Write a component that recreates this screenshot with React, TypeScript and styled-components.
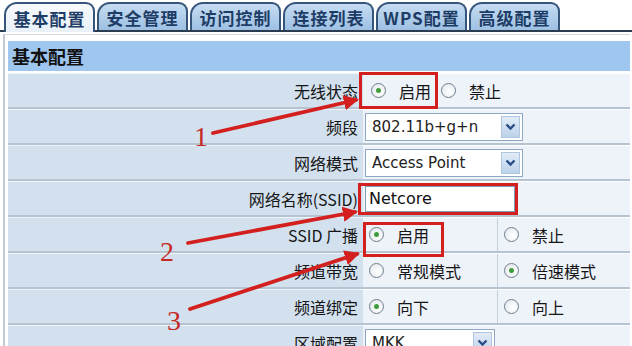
import React from "react";
import styled, { createGlobalStyle } from "styled-components";

const Global = createGlobalStyle`
  html, body { margin: 0; padding: 0; background: #fff; }
  body { font-family: "Noto Sans CJK SC", "Noto Sans", sans-serif; }
`;

const Page = styled.div`
  position: relative;
  width: 632px;
  height: 346px;
  overflow: hidden;
  background: #fff;
`;

const TabBar = styled.div`
  display: flex;
  align-items: flex-end;
  gap: 2px;
  height: 30px;
  padding: 0 0 0 4px;
  border-bottom: 2px solid #2c3c50;
`;

const Tab = styled.div<{ $active?: boolean }>`
  width: 91px;
  height: ${(p) => (p.$active ? "30px" : "28px")};
  margin-bottom: ${(p) => (p.$active ? "-2px" : "0")};
  box-sizing: border-box;
  border: 2px solid #36557a;
  border-bottom: none;
  border-radius: 13px 9px 0 0;
  background: ${(p) =>
    p.$active
      ? "linear-gradient(#f7fafd, #e9f0f7)"
      : "linear-gradient(#c6dcf2, #9dc0e3)"};
  display: flex;
  align-items: center;
  justify-content: center;
  font-weight: 700;
  font-size: 17px;
  letter-spacing: 1px;
  color: #1d3d66;
`;

const Panel = styled.div`
  margin: 2px 2px 0 3px;
  border-left: 2px solid #c3cad3;
  border-top: 1px solid #d3d9df;
  padding: 6px 0 0 3px;
`;

const Header = styled.div`
  height: 30px;
  margin-bottom: 2px;
  background: #9ec6ee;
  display: flex;
  align-items: center;
  padding-left: 4px;
  font-weight: 700;
  font-size: 18px;
  color: #111;
`;

const Row = styled.div`
  display: grid;
  grid-template-columns: 355px 1fr;
  height: 36px;
  box-sizing: border-box;
  border-bottom: 2px solid #b6c4d2;
`;

const Label = styled.div`
  background: #d3e1ef;
  border-top: 1px solid #eef4fa;
  display: flex;
  align-items: center;
  justify-content: flex-end;
  padding-right: 5px;
  font-size: 16px;
  color: #151515;
  white-space: nowrap;
`;

const Value = styled.div<{ $split?: boolean }>`
  background: #eef3f9;
  border-top: 1px solid #fbfdff;
  display: ${(p) => (p.$split ? "grid" : "flex")};
  grid-template-columns: 134px 1fr;
  align-items: center;
  padding-left: ${(p) => (p.$split ? "0" : "2px")};
`;

const Cell = styled.div<{ $divider?: boolean }>`
  height: 100%;
  display: flex;
  align-items: center;
  border-left: ${(p) => (p.$divider ? "1px solid #c3cfdb" : "none")};
`;

const RadioItem = styled.label`
  display: flex;
  align-items: center;
  gap: 13px;
  margin-left: 6px;
  margin-right: 4px;
  font-size: 16px;
  color: #151515;
`;

const Circle = styled.span<{ $on?: boolean }>`
  width: 15px;
  height: 15px;
  box-sizing: border-box;
  border-radius: 50%;
  border: 1px solid #6e7e8e;
  background: radial-gradient(circle at 60% 60%, #ffffff, #e1e6ea);
  display: flex;
  align-items: center;
  justify-content: center;
  &::after {
    content: "";
    width: 5px;
    height: 5px;
    border-radius: 50%;
    background: ${(p) => (p.$on ? "#3f9b3c" : "transparent")};
  }
`;

const Select = styled.div<{ $w: number }>`
  width: ${(p) => p.$w}px;
  height: 28px;
  box-sizing: border-box;
  border: 1px solid #8ea7c2;
  background: #fff;
  display: flex;
  align-items: center;
  justify-content: space-between;
  padding: 0 2px 0 6px;
  font-family: "DejaVu Sans", sans-serif;
  font-size: 15px;
  color: #222;
`;

const DropBtn = styled.span`
  width: 19px;
  height: 22px;
  box-sizing: border-box;
  border: 1px solid #b0c6df;
  background: linear-gradient(#e2ecf8, #bcd1ea);
  display: flex;
  align-items: center;
  justify-content: center;
`;

const TextInput = styled.div`
  width: 150px;
  height: 26px;
  box-sizing: border-box;
  border: 1px solid #7f9db9;
  background: #fff;
  display: flex;
  align-items: center;
  padding-left: 3px;
  font-family: "DejaVu Sans", sans-serif;
  font-size: 16px;
  color: #111;
`;

const Overlay = styled.svg`
  position: absolute;
  left: 0;
  top: 0;
  pointer-events: none;
`;

const Mark = styled.div<{ $x: number; $y: number; $w: number; $h: number }>`
  position: absolute;
  left: ${(p) => p.$x}px;
  top: ${(p) => p.$y}px;
  width: ${(p) => p.$w}px;
  height: ${(p) => p.$h}px;
  box-sizing: border-box;
  border: 3px solid #d3201f;
  pointer-events: none;
`;

const Num = styled.span<{ $x: number; $y: number }>`
  position: absolute;
  left: ${(p) => p.$x}px;
  top: ${(p) => p.$y}px;
  font-family: "Liberation Serif", serif;
  font-size: 28px;
  line-height: 1;
  color: #c52a26;
`;

const Chevron = () => (
  <svg width="11" height="8" viewBox="0 0 11 8">
    <path d="M1.5 1.5 L5.5 5.5 L9.5 1.5" fill="none" stroke="#2a4d86" strokeWidth="2.4" />
  </svg>
);

const Radio = ({ on, text }: { on?: boolean; text: string }) => (
  <RadioItem>
    <Circle $on={on} />
    {text}
  </RadioItem>
);

const Dropdown = ({ w, text }: { w: number; text: string }) => (
  <Select $w={w}>
    <span>{text}</span>
    <DropBtn>
      <Chevron />
    </DropBtn>
  </Select>
);

const tabs = ["基本配置", "安全管理", "访问控制", "连接列表", "WPS配置", "高级配置"];

const arrows = [
  { x1: 213, y1: 133, x2: 356, y2: 100 },
  { x1: 188, y1: 243, x2: 355, y2: 212 },
  { x1: 190, y1: 309, x2: 357, y2: 254 },
];

export default function App() {
  return (
    <Page>
      <Global />
      <TabBar>
        {tabs.map((t, i) => (
          <Tab key={t} $active={i === 0}>
            {t}
          </Tab>
        ))}
      </TabBar>
      <Panel>
        <Header>基本配置</Header>
        <Row>
          <Label>无线状态</Label>
          <Value>
            <Radio on text="启用" />
            <Radio text="禁止" />
          </Value>
        </Row>
        <Row>
          <Label>频段</Label>
          <Value>
            <Dropdown w={158} text="802.11b+g+n" />
          </Value>
        </Row>
        <Row>
          <Label>网络模式</Label>
          <Value>
            <Dropdown w={158} text="Access Point" />
          </Value>
        </Row>
        <Row>
          <Label>网络名称(SSID)</Label>
          <Value>
            <TextInput>Netcore</TextInput>
          </Value>
        </Row>
        <Row>
          <Label>SSID 广播</Label>
          <Value $split>
            <Cell>
              <Radio on text="启用" />
            </Cell>
            <Cell $divider>
              <Radio text="禁止" />
            </Cell>
          </Value>
        </Row>
        <Row>
          <Label>频道带宽</Label>
          <Value $split>
            <Cell>
              <Radio text="常规模式" />
            </Cell>
            <Cell $divider>
              <Radio on text="倍速模式" />
            </Cell>
          </Value>
        </Row>
        <Row>
          <Label>频道绑定</Label>
          <Value $split>
            <Cell>
              <Radio on text="向下" />
            </Cell>
            <Cell $divider>
              <Radio text="向上" />
            </Cell>
          </Value>
        </Row>
        <Row>
          <Label>区域配置</Label>
          <Value>
            <Dropdown w={130} text="MKK" />
          </Value>
        </Row>
      </Panel>

      <Mark $x={359} $y={72} $w={79} $h={37} />
      <Mark $x={358} $y={183} $w={160} $h={32} />
      <Mark $x={363} $y={222} $w={81} $h={35} />

      <Overlay width="632" height="346" viewBox="0 0 632 346">
        <defs>
          <marker id="head" viewBox="0 0 10 10" refX="8" refY="5" markerWidth="4" markerHeight="4" orient="auto">
            <path d="M0 0 L10 5 L0 10 z" fill="#d3201f" />
          </marker>
        </defs>
        {arrows.map((a, i) => (
          <line
            key={i}
            x1={a.x1}
            y1={a.y1}
            x2={a.x2}
            y2={a.y2}
            stroke="#d3201f"
            strokeWidth="3.8"
            strokeLinecap="round"
            markerEnd="url(#head)"
          />
        ))}
      </Overlay>
      <Num $x={194} $y={123}>1</Num>
      <Num $x={160} $y={238}>2</Num>
      <Num $x={167} $y={307}>3</Num>
    </Page>
  );
}
